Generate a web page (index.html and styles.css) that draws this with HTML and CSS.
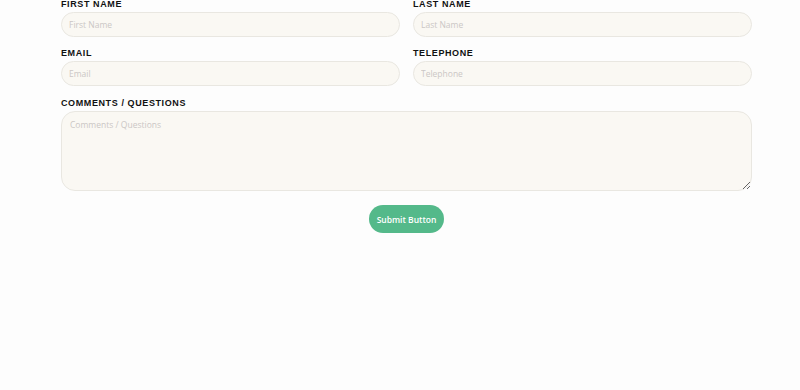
FILE: index.html
```html
<!DOCTYPE html>
<html lang="en">
  <head>
    <meta charset="UTF-8" />
    <meta name="viewport" content="width=device-width, initial-scale=1.0" />
    <title>Contact Form</title>
    <link rel="stylesheet" href="styles.css">
  </head>
  <body>
    <form class="contact-form">
      <div class="row">
        <div class="field">
          <label for="firstName">FIRST NAME</label>
          <input type="text" id="firstName" placeholder="First Name" />
        </div>
        <div class="field">
          <label for="lastName">LAST NAME</label>
          <input type="text" id="lastName" placeholder="Last Name" />
        </div>
      </div>
      <div class="row">
        <div class="field">
          <label for="email">EMAIL</label>
          <input type="email" id="email" placeholder="Email" />
        </div>
        <div class="field">
          <label for="phone">TELEPHONE</label>
          <input type="tel" id="phone" placeholder="Telephone" />
        </div>
      </div>
      <div class="field field-wide">
        <label for="comments">COMMENTS / QUESTIONS</label>
        <textarea id="comments" placeholder="Comments / Questions"></textarea>
      </div>
      <div class="actions">
        <button type="submit" class="submit-btn">Submit Button</button>
      </div>
    </form>
  </body>
</html>
```

FILE: styles.css
```css
body {
  margin: 0;
  background: #fdfdfd;
  font-family: "Liberation Sans", Arial, sans-serif;
}

.contact-form {
  width: 691px;
  margin: -1px 0 0 61px;
}

.row {
  display: grid;
  grid-template-columns: 1fr 1fr;
  column-gap: 13px;
}

.field {
  display: flex;
  flex-direction: column;
  margin-bottom: 11px;
}

.field-wide {
  margin-top: 1px;
}

.field label {
  font-size: 9px;
  font-weight: bold;
  letter-spacing: 0.6px;
  line-height: 11px;
  color: #111;
  margin-bottom: 2px;
}

.field input,
.field textarea {
  box-sizing: border-box;
  width: 100%;
  background: #faf8f3;
  border: 1px solid #e9e7e1;
  font-family: "Open Sans", sans-serif;
  font-size: 8.5px;
  color: #333;
  outline: none;
}

.field input {
  height: 25px;
  border-radius: 13px;
  padding: 0 7px;
}

.field textarea {
  height: 80px;
  border-radius: 14px;
  padding: 7px 8px;
  resize: vertical;
}

.field input::placeholder,
.field textarea::placeholder {
  color: #cbc7c5;
}

.actions {
  display: flex;
  justify-content: center;
  padding-top: 3px;
}

.submit-btn {
  width: 75px;
  height: 28px;
  border: none;
  border-radius: 14px;
  background: #54b98a;
  color: #fff;
  font-family: "Open Sans", sans-serif;
  font-size: 8.5px;
  font-weight: 600;
  cursor: pointer;
}
```
